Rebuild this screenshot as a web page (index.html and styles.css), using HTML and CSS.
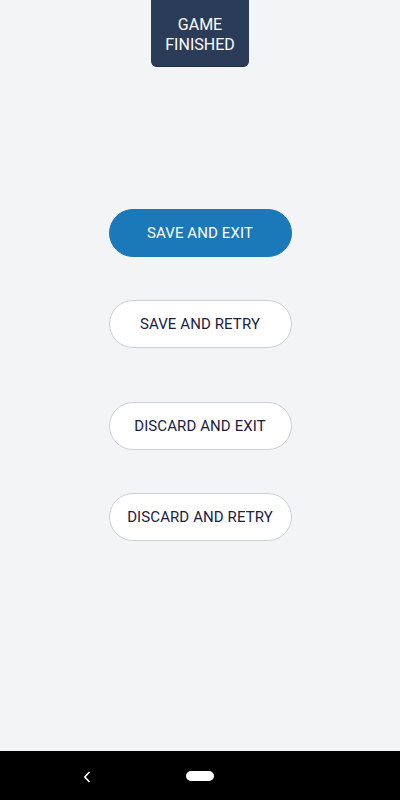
FILE: index.html
```html
<!DOCTYPE html>
<html>
<head>
<meta charset="utf-8">
<link rel="stylesheet" href="styles.css">
</head>
<body>
<div class="screen">
  <main class="content">
    <div class="status">GAME<br>FINISHED</div>
    <div class="actions">
      <div class="group">
        <button class="btn primary">SAVE AND EXIT</button>
        <button class="btn">SAVE AND RETRY</button>
      </div>
      <div class="group">
        <button class="btn">DISCARD AND EXIT</button>
        <button class="btn">DISCARD AND RETRY</button>
      </div>
    </div>
  </main>
  <nav class="navbar">
    <svg class="back" width="8" height="12" viewBox="0 0 8 12"><path d="M6.5 1 L1.8 6 L6.5 11" fill="none" stroke="#fff" stroke-width="1.6"/></svg>
    <div class="home"></div>
  </nav>
</div>
</body>
</html>
```
FILE: styles.css
```css
html, body {
  margin: 0;
  padding: 0;
}
body {
  background: #f3f4f6;
  font-family: Roboto, "Liberation Sans", sans-serif;
}
.screen {
  width: 400px;
  height: 800px;
  display: flex;
  flex-direction: column;
}
.content {
  flex: 1;
  display: flex;
  flex-direction: column;
  align-items: center;
}
.status {
  width: 98px;
  box-sizing: border-box;
  height: 67px;
  padding-top: 15px;
  background: #2b3c58;
  border-bottom: 1px solid #1b2a48;
  border-radius: 0 0 6px 6px;
  color: #fff;
  font-size: 16px;
  line-height: 20px;
  text-align: center;
}
.actions {
  margin-top: 142px;
  display: flex;
  flex-direction: column;
  gap: 54px;
}
.group {
  display: flex;
  flex-direction: column;
  gap: 43px;
}
.btn {
  width: 183px;
  height: 48px;
  box-sizing: border-box;
  border-radius: 24px;
  border: 1px solid #cbd1da;
  background: #fff;
  color: #1a2142;
  font-family: Roboto, "Liberation Sans", sans-serif;
  font-size: 15px;
  letter-spacing: 0.1px;
  padding: 0;
}
.btn.primary {
  background: #1b78b9;
  border-color: #1b78b9;
  color: #fff;
}
.navbar {
  height: 49px;
  background: #000;
  position: relative;
  display: flex;
  align-items: center;
}
.back {
  position: absolute;
  left: 83px;
  top: 20px;
}
.home {
  position: absolute;
  left: 186px;
  top: 20px;
  width: 28px;
  height: 10px;
  border-radius: 5px;
  background: #fff;
}
```
